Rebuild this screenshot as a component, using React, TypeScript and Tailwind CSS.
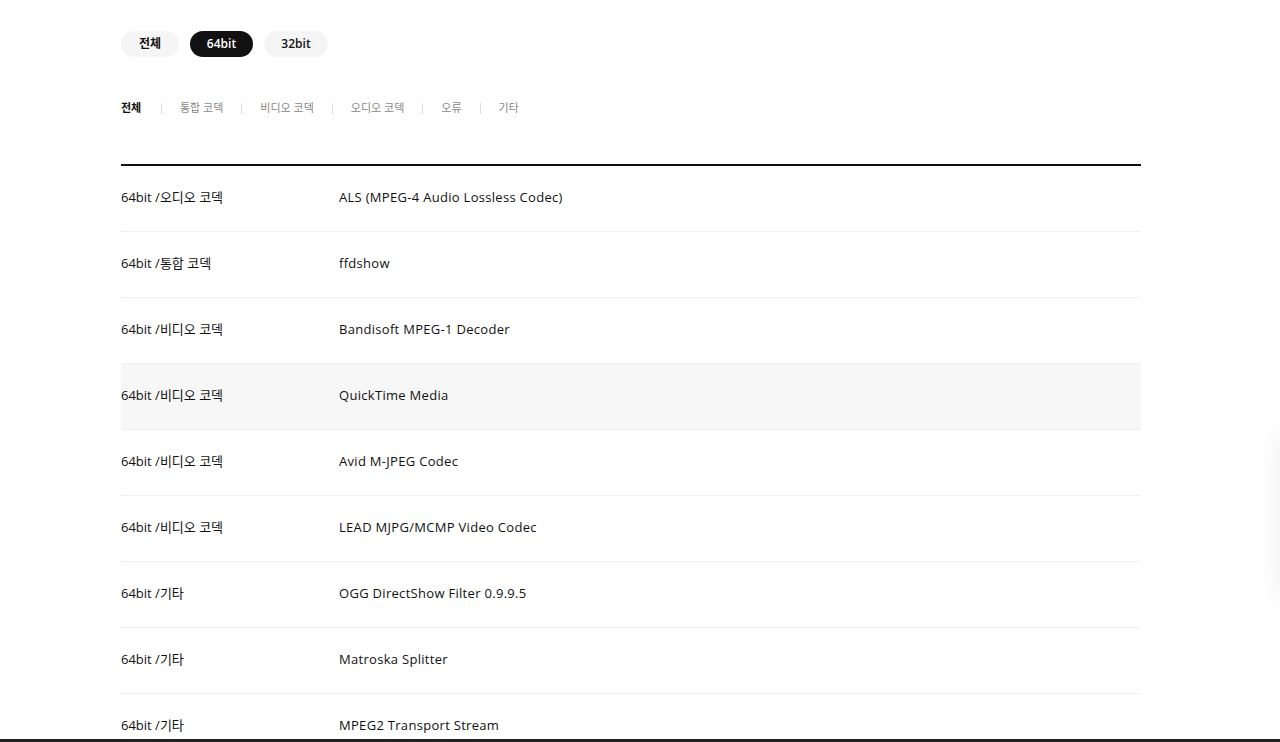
import React from "react";

const rows = [
  { cat: "64bit /오디오 코덱", name: "ALS (MPEG-4 Audio Lossless Codec)" },
  { cat: "64bit /통합 코덱", name: "ffdshow" },
  { cat: "64bit /비디오 코덱", name: "Bandisoft MPEG-1 Decoder" },
  { cat: "64bit /비디오 코덱", name: "QuickTime Media", active: true },
  { cat: "64bit /비디오 코덱", name: "Avid M-JPEG Codec" },
  { cat: "64bit /비디오 코덱", name: "LEAD MJPG/MCMP Video Codec" },
  { cat: "64bit /기타", name: "OGG DirectShow Filter 0.9.9.5" },
  { cat: "64bit /기타", name: "Matroska Splitter" },
  { cat: "64bit /기타", name: "MPEG2 Transport Stream" },
];

const cats = ["전체", "통합 코덱", "비디오 코덱", "오디오 코덱", "오류", "기타"];

export default function App() {
  return (
    <div className="min-h-screen bg-white font-['Open_Sans','Noto_Sans_CJK_KR',sans-serif] text-[#111]">
      <div className="ml-[121px] w-[1020px] pt-[31px]">
        <div className="flex gap-[11px]">
          <button className="h-[26px] w-[58px] rounded-full bg-[#f5f5f5] text-[12px] font-semibold text-[#111]">
            전체
          </button>
          <button className="h-[26px] w-[63px] rounded-full bg-[#111] text-[12px] font-semibold text-white">
            64bit
          </button>
          <button className="h-[26px] w-[64px] rounded-full bg-[#f5f5f5] text-[12px] font-semibold text-[#111]">
            32bit
          </button>
        </div>

        <div className="mt-[43px] flex items-center text-[11px]">
          {cats.map((c, i) => (
            <React.Fragment key={c}>
              {i > 0 && <span className="ml-[18px] mr-[18px] h-[11px] w-px bg-[#ddd]"></span>}
              <span className={i === 0 ? "w-[22px] font-bold text-[#111]" : "text-[#888]"}>{c}</span>
            </React.Fragment>
          ))}
        </div>

        <div className="mt-[47px] border-t-2 border-[#111]">
          {rows.map((r, i) => (
            <div
              key={i}
              className={`flex h-[66px] items-center border-b border-[#f0f0f0] text-[13px] ${
                r.active ? "bg-[#f7f7f7]" : ""
              }`}
            >
              <div className="w-[218px]">{r.cat}</div>
              <div className="tracking-[0.3px]">{r.name}</div>
            </div>
          ))}
        </div>
      </div>

      <div className="fixed right-[-40px] top-[430px] h-[170px] w-[40px] rounded-full shadow-[0_0_30px_rgba(0,0,0,0.08)]"></div>
      <div className="fixed bottom-0 left-0 h-[3px] w-full bg-[#222]"></div>
    </div>
  );
}
